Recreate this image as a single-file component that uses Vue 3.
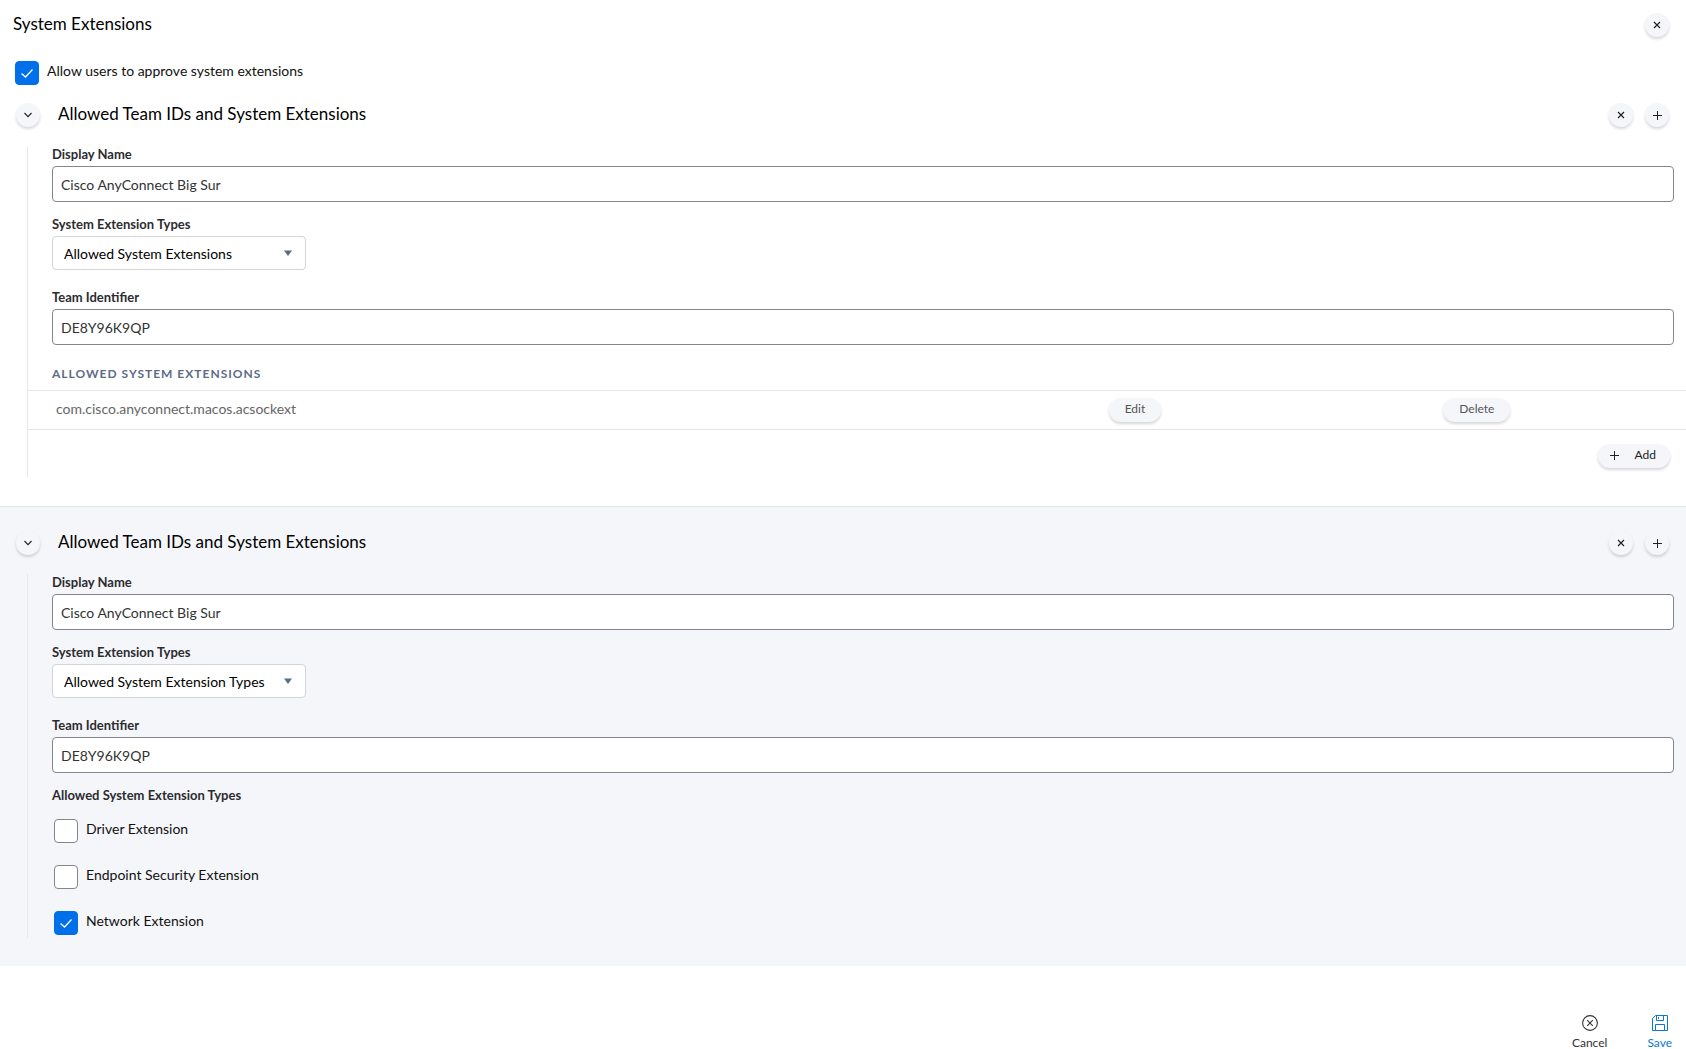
<template>
  <main class="payload">
    <header class="payload-header">
      <h1 class="title">System Extensions</h1>
      <button type="button" class="round-button" aria-label="Remove payload">
        <svg width="8" height="8" viewBox="0 0 8 8" fill="none" stroke="currentColor" stroke-width="1.2">
          <path d="M1 1l6 6M7 1L1 7" />
        </svg>
      </button>
    </header>

    <label class="check approve">
      <span class="check-box">
        <input v-model="allowApproval" type="checkbox" />
        <svg class="tick" viewBox="0 0 24 24" fill="none" stroke="#fff" stroke-width="1.3">
          <path d="M6.5 12.5l4 3.5 7-7.5" />
        </svg>
      </span>
      <span class="check-text">Allow users to approve system extensions</span>
    </label>

    <section
      v-for="(entry, index) in entries"
      :key="entry.id"
      class="entry"
      :class="{ shaded: index % 2 === 1 }"
    >
      <div class="entry-header">
        <button type="button" class="round-button" aria-label="Toggle section" @click="entry.open = !entry.open">
          <svg width="10" height="6" viewBox="0 0 10 6" fill="none" stroke="currentColor" stroke-width="1.1">
            <path d="M1.5 1L5 4.7 8.5 1" />
          </svg>
        </button>
        <h2 class="title entry-title">Allowed Team IDs and System Extensions</h2>
        <div class="entry-actions">
          <button type="button" class="round-button" aria-label="Remove entry">
            <svg width="8" height="8" viewBox="0 0 8 8" fill="none" stroke="currentColor" stroke-width="1.2">
              <path d="M1 1l6 6M7 1L1 7" />
            </svg>
          </button>
          <button type="button" class="round-button" aria-label="Add entry">
            <svg width="9" height="9" viewBox="0 0 9 9" fill="none" stroke="currentColor" stroke-width="1">
              <path d="M4.5 0v9M0 4.5h9" />
            </svg>
          </button>
        </div>
      </div>

      <div v-show="entry.open" class="entry-body">
        <div class="field">
          <label class="field-label" :for="`name-${entry.id}`">Display Name</label>
          <input :id="`name-${entry.id}`" v-model="entry.name" class="text-input" type="text" />
        </div>

        <div class="field field-select">
          <label class="field-label" :for="`type-${entry.id}`">System Extension Types</label>
          <div class="select-wrap">
            <select :id="`type-${entry.id}`" v-model="entry.type" class="select">
              <option v-for="type in types" :key="type">{{ type }}</option>
            </select>
            <svg class="caret" width="8" height="6" viewBox="0 0 8 6" fill="#5b6b88">
              <path d="M0 0.5h8L4 6z" />
            </svg>
          </div>
        </div>

        <div class="field">
          <label class="field-label" :for="`team-${entry.id}`">Team Identifier</label>
          <input :id="`team-${entry.id}`" v-model="entry.team" class="text-input" type="text" />
        </div>

        <template v-if="entry.type === 'Allowed System Extensions'">
          <table class="bundles">
            <thead>
              <tr>
                <th colspan="3">Allowed System Extensions</th>
              </tr>
            </thead>
            <tbody>
              <tr v-for="bundle in entry.bundles" :key="bundle">
                <td class="bundle-id">{{ bundle }}</td>
                <td class="bundle-edit"><button type="button" class="pill">Edit</button></td>
                <td><button type="button" class="pill">Delete</button></td>
              </tr>
            </tbody>
          </table>
          <div class="add-row">
            <button type="button" class="pill pill-add">
              <svg width="9" height="9" viewBox="0 0 9 9" fill="none" stroke="currentColor" stroke-width="1">
                <path d="M4.5 0v9M0 4.5h9" />
              </svg>
              Add
            </button>
          </div>
        </template>

        <fieldset v-else class="kinds">
          <legend class="field-label">Allowed System Extension Types</legend>
          <div class="kind-list">
            <label v-for="kind in entry.kinds" :key="kind.label" class="check">
              <span class="check-box">
                <input v-model="kind.checked" type="checkbox" />
                <svg class="tick" viewBox="0 0 24 24" fill="none" stroke="#fff" stroke-width="1.3">
                  <path d="M6.5 12.5l4 3.5 7-7.5" />
                </svg>
              </span>
              <span class="check-text">{{ kind.label }}</span>
            </label>
          </div>
        </fieldset>
      </div>
    </section>

    <footer class="payload-footer">
      <button type="button" class="footer-button">
        <svg width="16" height="16" viewBox="0 0 16 16" fill="none" stroke="currentColor" stroke-width="1.1">
          <circle cx="8" cy="8" r="7.4" />
          <path d="M5.2 5.2l5.6 5.6M10.8 5.2l-5.6 5.6" />
        </svg>
        Cancel
      </button>
      <button type="button" class="footer-button save">
        <svg width="16" height="16" viewBox="0 0 16 16" fill="none" stroke="currentColor" stroke-width="1">
          <path d="M3.5.5h12v15H.5v-12z" />
          <path d="M4.5.5v5h7v-5M6.5 2v2" />
          <path d="M3.5 15.5v-6h9v6" />
        </svg>
        Save
      </button>
    </footer>
  </main>
</template>

<script setup>
import { ref } from 'vue'

const types = ['Allowed System Extensions', 'Allowed System Extension Types']

const allowApproval = ref(true)

const entries = ref([
  {
    id: 1,
    open: true,
    name: 'Cisco AnyConnect Big Sur',
    type: types[0],
    team: 'DE8Y96K9QP',
    bundles: ['com.cisco.anyconnect.macos.acsockext'],
    kinds: []
  },
  {
    id: 2,
    open: true,
    name: 'Cisco AnyConnect Big Sur',
    type: types[1],
    team: 'DE8Y96K9QP',
    bundles: [],
    kinds: [
      { label: 'Driver Extension', checked: false },
      { label: 'Endpoint Security Extension', checked: false },
      { label: 'Network Extension', checked: true }
    ]
  }
])
</script>

<style>
body {
  background: #fff;
}
</style>

<style scoped>
.payload {
  font-family: Lato, 'Liberation Sans', sans-serif;
  font-size: 14px;
  color: #111;
}

.payload * {
  box-sizing: border-box;
}

button,
input,
select {
  font: inherit;
}

svg {
  display: block;
}

.title {
  margin: 0;
  padding-bottom: 2px;
  font-size: 17px;
  line-height: 22px;
  font-weight: 400;
  color: #000;
}

.payload-header {
  display: flex;
  align-items: center;
  justify-content: space-between;
  padding: 13px 17px 0 13px;
}

/* ── Buttons ── */
.round-button {
  display: flex;
  align-items: center;
  justify-content: center;
  width: 24px;
  height: 24px;
  padding: 0;
  border: 0;
  border-radius: 50%;
  background: #f5f6fa;
  color: #222;
  box-shadow: 0 2px 3px rgba(0, 0, 0, 0.16);
  cursor: pointer;
}

.pill {
  height: 24px;
  padding: 0 16px 2px;
  border: 0;
  border-radius: 12px;
  background: #f5f6fa;
  color: #555;
  font-size: 12px;
  line-height: 22px;
  box-shadow: 0 2px 3px rgba(0, 0, 0, 0.16);
  cursor: pointer;
}

.pill-add {
  display: flex;
  align-items: center;
  gap: 16px;
  padding: 0 14px 2px 12px;
  color: #222;
}

/* ── Checkboxes ── */
.check {
  display: flex;
  align-items: flex-start;
  gap: 8px;
}

.approve {
  margin: 24px 15px 0;
}

.check-box {
  display: grid;
  flex-shrink: 0;
}

.check-box > * {
  grid-area: 1 / 1;
  width: 24px;
  height: 24px;
}

.check-box input {
  appearance: none;
  margin: 0;
  border: 1px solid #85858f;
  border-radius: 4px;
  background: #fff;
}

.check-box input:checked {
  border-color: #0070ea;
  background: #0070ea;
}

.tick {
  visibility: hidden;
  pointer-events: none;
}

.check-box input:checked + .tick {
  visibility: visible;
}

.check-text {
  line-height: 20px;
}

/* ── Entries ── */
.entry {
  padding: 18px 0 28px;
}

.entry.shaded {
  padding-top: 24px;
  border-top: 1px solid #e3e4e8;
  background: #f5f6fa;
}

.entry-header {
  display: flex;
  align-items: center;
  padding: 0 17px 0 16px;
}

.entry-title {
  flex: 1;
  margin-left: 18px;
}

.entry-actions {
  display: flex;
  gap: 12px;
}

.entry-body {
  margin: 19px 0 0 27px;
  border-left: 1px solid #e8e8ec;
}

.field {
  padding: 0 12px 14px 24px;
}

.field-select {
  padding-bottom: 19px;
}

.field-label {
  display: block;
  margin-bottom: 4px;
  padding: 0;
  font-size: 13px;
  line-height: 16px;
  font-weight: 700;
  color: #2c2c30;
}

.text-input {
  display: block;
  width: 100%;
  height: 36px;
  padding: 0 8px;
  border: 1px solid #85858f;
  border-radius: 4px;
  background: #fff;
  color: #333;
}

.select-wrap {
  display: grid;
  align-items: center;
  width: 254px;
}

.select {
  grid-area: 1 / 1;
  appearance: none;
  width: 100%;
  height: 34px;
  padding: 0 30px 0 11px;
  border: 1px solid #d3d3d9;
  border-radius: 4px;
  background: #fff;
  color: #000;
}

.caret {
  grid-area: 1 / 1;
  justify-self: end;
  margin-right: 14px;
  pointer-events: none;
}

/* ── Extension table ── */
.bundles {
  width: 100%;
  border-collapse: separate;
  border-spacing: 0;
}

.bundles th {
  padding: 7px 0 8px 24px;
  font-size: 12px;
  line-height: 16px;
  letter-spacing: 1px;
  text-align: left;
  text-transform: uppercase;
  color: #5b6b88;
}

.bundles td {
  height: 40px;
  padding: 0 0 0 6px;
  border-top: 1px solid #e6e6e6;
  border-bottom: 1px solid #e6e6e6;
}

.bundles .bundle-id {
  width: 65%;
  padding: 0 0 4px 28px;
  color: #666;
}

.bundles .bundle-edit {
  width: 20%;
  padding-left: 3px;
}

.add-row {
  display: flex;
  justify-content: flex-end;
  padding: 14px 16px 10px;
}

.kinds {
  margin: 0;
  padding: 0 12px 3px 24px;
  border: 0;
}

.kind-list {
  display: flex;
  flex-direction: column;
  gap: 22px;
  padding: 12px 2px 0;
}

/* ── Footer ── */
.payload-footer {
  display: flex;
  justify-content: flex-end;
  gap: 40px;
  padding: 49px 14px 0;
}

.footer-button {
  display: flex;
  flex-direction: column;
  align-items: center;
  gap: 4px;
  padding: 0;
  border: 0;
  background: none;
  color: #333;
  font-size: 12px;
  line-height: 15px;
  cursor: pointer;
}

.footer-button.save {
  color: #0a78d0;
}
</style>
